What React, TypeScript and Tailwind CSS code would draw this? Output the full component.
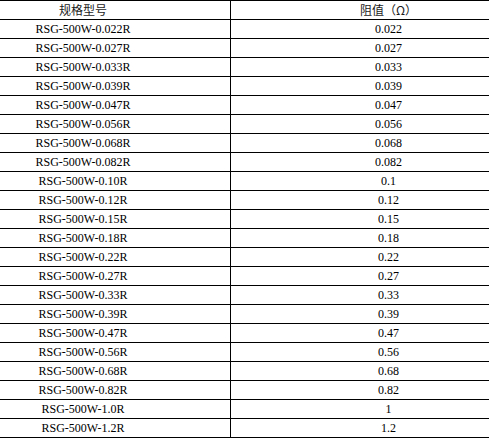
const rows: [string, string][] = [
  ['RSG-500W-0.022R', '0.022'],
  ['RSG-500W-0.027R', '0.027'],
  ['RSG-500W-0.033R', '0.033'],
  ['RSG-500W-0.039R', '0.039'],
  ['RSG-500W-0.047R', '0.047'],
  ['RSG-500W-0.056R', '0.056'],
  ['RSG-500W-0.068R', '0.068'],
  ['RSG-500W-0.082R', '0.082'],
  ['RSG-500W-0.10R', '0.1'],
  ['RSG-500W-0.12R', '0.12'],
  ['RSG-500W-0.15R', '0.15'],
  ['RSG-500W-0.18R', '0.18'],
  ['RSG-500W-0.22R', '0.22'],
  ['RSG-500W-0.27R', '0.27'],
  ['RSG-500W-0.33R', '0.33'],
  ['RSG-500W-0.39R', '0.39'],
  ['RSG-500W-0.47R', '0.47'],
  ['RSG-500W-0.56R', '0.56'],
  ['RSG-500W-0.68R', '0.68'],
  ['RSG-500W-0.82R', '0.82'],
  ['RSG-500W-1.0R', '1'],
  ['RSG-500W-1.2R', '1.2'],
];

function Row({ left, right, header = false }: { left: string; right: string; header?: boolean }) {
  const font = header
    ? "font-['Noto_Sans_CJK_SC',sans-serif] text-[12px] text-[#1a1a1a]"
    : "font-['Liberation_Serif','Times_New_Roman',serif] text-[12px] text-black";
  return (
    <div className={`flex h-[19px] border-b border-black leading-none ${font}`}>
      <div className="flex w-[231px] shrink-0 items-center justify-center border-r border-black pr-[64px]">
        {left}
      </div>
      <div className="flex flex-1 items-center justify-center pl-[57px]">{right}</div>
    </div>
  );
}

export default function App() {
  return (
    <div className="h-[441px] w-[489px] overflow-hidden bg-white">
      <div className="border-t border-black">
        <Row left="规格型号" right="阻值（Ω）" header />
        {rows.map(([model, ohm]) => (
          <Row key={model} left={model} right={ohm} />
        ))}
      </div>
    </div>
  );
}
